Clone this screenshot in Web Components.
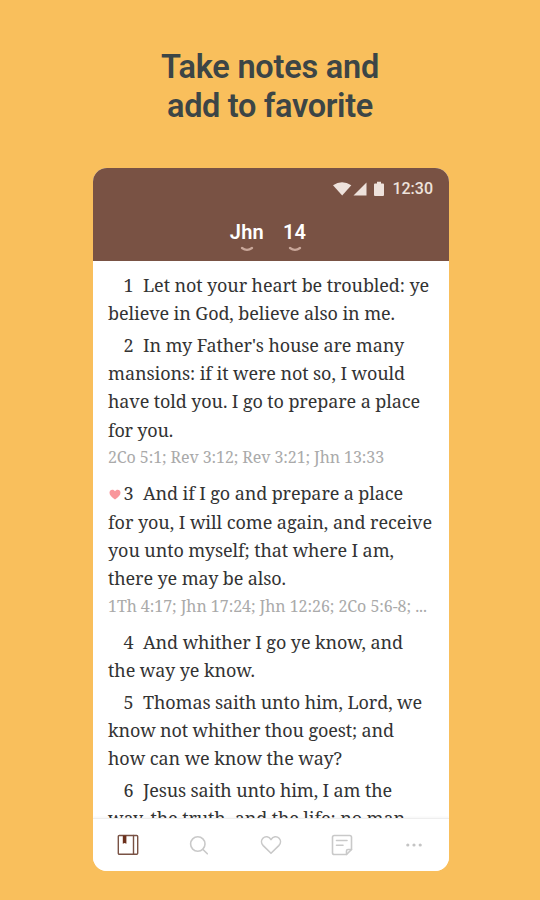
<!DOCTYPE html>
<html lang="en">
<head>
<meta charset="utf-8">
<title>Take notes and add to favorite</title>
<style>
  body {
    margin: 0;
    background: #f9bf5c;
    font-family: Roboto, "Liberation Sans", sans-serif;
  }
</style>
</head>
<body>
<promo-page>
  <fit-line slot="title" width="218">Take notes and</fit-line>
  <fit-line slot="title" width="206">add to favorite</fit-line>
  <phone-frame>
    <status-bar slot="header"></status-bar>
    <passage-picker slot="header" book="Jhn" chapter="14"></passage-picker>
    <bible-verse number="1">
      <fit-line width="286">Let not your heart be troubled: ye</fit-line>
      <fit-line width="287">believe in God, believe also in me.</fit-line>
    </bible-verse>
    <bible-verse number="2">
      <fit-line width="261">In my Father's house are many</fit-line>
      <fit-line width="297">mansions: if it were not so, I would</fit-line>
      <fit-line width="312">have told you. I go to prepare a place</fit-line>
      <fit-line width="65">for you.</fit-line>
      <fit-line slot="refs" width="276">2Co 5:1; Rev 3:12; Rev 3:21; Jhn 13:33</fit-line>
    </bible-verse>
    <bible-verse number="3" favorite>
      <fit-line width="260">And if I go and prepare a place</fit-line>
      <fit-line width="324">for you, I will come again, and receive</fit-line>
      <fit-line width="286">you unto myself; that where I am,</fit-line>
      <fit-line width="178">there ye may be also.</fit-line>
      <fit-line slot="refs" width="319">1Th 4:17; Jhn 17:24; Jhn 12:26; 2Co 5:6-8; ...</fit-line>
    </bible-verse>
    <bible-verse number="4">
      <fit-line width="260">And whither I go ye know, and</fit-line>
      <fit-line width="147">the way ye know.</fit-line>
    </bible-verse>
    <bible-verse number="5">
      <fit-line width="279">Thomas saith unto him, Lord, we</fit-line>
      <fit-line width="286">know not whither thou goest; and</fit-line>
      <fit-line width="234">how can we know the way?</fit-line>
    </bible-verse>
    <bible-verse number="6">
      <fit-line width="249">Jesus saith unto him, I am the</fit-line>
      <fit-line width="297">way, the truth, and the life: no man</fit-line>
    </bible-verse>
    <tab-bar slot="footer"></tab-bar>
  </phone-frame>
</promo-page>

<script>
function attach(el, html) {
  const template = document.createElement("template");
  template.innerHTML = html;
  el.attachShadow({ mode: "open" }).appendChild(template.content.cloneNode(true));
}

/**
 * One line of text, tracked so that it fills the given width.
 */
class FitLine extends HTMLElement {
  constructor() {
    super();
    attach(this, `
      <style>
        :host { display: block; white-space: nowrap; }
        span { display: inline-block; }
      </style>
      <span><slot></slot></span>
    `);
  }

  fit() {
    const span = this.shadowRoot.querySelector("span");
    const width = Number(this.getAttribute("width"));
    const count = this.textContent.length;
    span.style.letterSpacing = "0px";
    const natural = span.getBoundingClientRect().width;
    span.style.letterSpacing = (width - natural) / count + "px";
  }
}

class PromoPage extends HTMLElement {
  constructor() {
    super();
    attach(this, `
      <style>
        :host {
          display: flex;
          flex-direction: column;
          align-items: center;
          box-sizing: border-box;
          height: 900px;
          padding-top: 48px;
          overflow: hidden;
        }
        header {
          display: flex;
          flex-direction: column;
          align-items: center;
          height: 120px;
          color: #3c4546;
          font-size: 32.500px;
          font-weight: 600;
          line-height: 38.500px;
        }
      </style>
      <header><slot name="title"></slot></header>
      <slot></slot>
    `);
  }
}

class PhoneFrame extends HTMLElement {
  constructor() {
    super();
    attach(this, `
      <style>
        :host {
          display: flex;
          flex-direction: column;
          width: 356px;
          height: 703px;
          margin-left: 1px;
          border-radius: 14px;
          overflow: hidden;
          background: #fff;
        }
        .header {
          flex: none;
          height: 93px;
          background: #795244;
          color: #fff;
        }
        main {
          flex: 1;
          min-height: 0;
          box-sizing: border-box;
          padding: 9.800px 15px 0 15.500px;
          overflow: hidden;
        }
      </style>
      <div class="header"><slot name="header"></slot></div>
      <main><slot></slot></main>
      <slot name="footer"></slot>
    `);
  }
}

class StatusBar extends HTMLElement {
  constructor() {
    super();
    attach(this, `
      <style>
        :host {
          display: flex;
          justify-content: flex-end;
          align-items: center;
          height: 41px;
          padding-right: 15.500px;
          color: #eee2dc;
          font-size: 16px;
          font-weight: 500;
        }
        svg { fill: currentColor; }
        .battery { margin: 0 8px 0 5px; }
      </style>
      <svg width="36" height="16" viewBox="0 0 36 16">
        <path d="M0 4.200Q9 -1.500 18.300 4.200L9.200 14.500Z"/>
        <path d="M20.500 14.500H33.500V1.500Z"/>
      </svg>
      <svg class="battery" width="10" height="16" viewBox="0 0 10 16">
        <path d="M3 .8h4v1.700h2q1 0 1 1v10.500q0 1-1 1H1q-1 0-1-1V3.500q0-1 1-1h2z"/>
      </svg>
      <span>12:30</span>
    `);
  }
}

class PassagePicker extends HTMLElement {
  constructor() {
    super();
    attach(this, `
      <style>
        :host {
          display: flex;
          justify-content: center;
          gap: 19px;
          height: 52px;
          padding-right: 5px;
          font-size: 20px;
          font-weight: 600;
          letter-spacing: .2px;
        }
        div {
          display: flex;
          flex-direction: column;
          align-items: center;
          padding-top: 11px;
          line-height: 24px;
        }
        svg {
          margin-top: 2px;
          fill: none;
          stroke: #c9a79a;
          stroke-width: 2.200;
          stroke-linecap: round;
        }
      </style>
      <div>
        <span class="book"></span>
        <svg width="14" height="7" viewBox="0 0 14 7"><path d="M2 2Q7 5.800 12 2"/></svg>
      </div>
      <div>
        <span class="chapter"></span>
        <svg width="14" height="7" viewBox="0 0 14 7"><path d="M2 2Q7 5.800 12 2"/></svg>
      </div>
    `);
    this.shadowRoot.querySelector(".book").textContent = this.getAttribute("book");
    this.shadowRoot.querySelector(".chapter").textContent = this.getAttribute("chapter");
  }
}

class BibleVerse extends HTMLElement {
  constructor() {
    super();
    attach(this, `
      <style>
        :host {
          display: block;
          margin-bottom: 3px;
          color: #333;
          font: 18px/28.400px "Noto Serif", "DejaVu Serif Condensed", "DejaVu Serif", serif;
          font-stretch: condensed;
        }
        .row { display: flex; }
        .mark {
          display: flex;
          align-items: center;
          width: 15.500px;
          flex: none;
        }
        svg { display: none; margin: 2px 0 0 .5px; fill: #f9969b; }
        :host([favorite]) svg { display: block; }
        .number { width: 19.500px; flex: none; }
        ::slotted([slot="refs"]) {
          height: 25.500px;
          margin-bottom: 9.500px;
          color: #aaa;
          font-size: 16px;
          line-height: 26.500px;
        }
      </style>
      <div class="row">
        <span class="mark">
          <svg width="12" height="11" viewBox="0 0 12 11">
            <path d="M6 10.500C2.500 7.800.5 6 .5 3.700.5 1.900 1.800.7 3.300.7 4.500.7 5.500 1.300 6 2.200 6.500 1.300 7.500.7 8.700.7 10.200.7 11.500 1.900 11.500 3.700 11.500 6 9.500 7.800 6 10.500Z"/>
          </svg>
        </span>
        <span class="number"></span>
        <slot name="first"></slot>
      </div>
      <slot></slot>
      <slot name="refs"></slot>
    `);
    this.shadowRoot.querySelector(".number").textContent = this.getAttribute("number");
  }

  connectedCallback() {
    // the opening line shares its row with the verse number
    this.querySelector("fit-line").slot = "first";
  }
}

class TabBar extends HTMLElement {
  constructor() {
    super();
    attach(this, `
      <style>
        :host {
          display: grid;
          grid-template-columns: repeat(5, 71.500px);
          justify-content: center;
          justify-items: center;
          align-items: center;
          flex: none;
          box-sizing: border-box;
          height: 53px;
          border-top: 1px solid #eee;
          background: #fff;
          box-shadow: 0 -1px 2px rgba(0, 0, 0, .04);
        }
        svg {
          width: 24px;
          height: 24px;
          fill: none;
          stroke: #c9c9c9;
          stroke-width: 1.600;
          stroke-linecap: round;
          stroke-linejoin: round;
        }
        .active { stroke: #795244; stroke-width: 1.400; }
        .active .ribbon { fill: #6c301c; stroke: none; }
        .dots { fill: #c4c4c4; stroke: none; }
      </style>
      <svg class="active" viewBox="0 0 24 24">
        <rect x="2.300" y="2.500" width="19.400" height="18.800" rx="1"/>
        <path d="M17.500 2.500V21.300"/>
        <path class="ribbon" d="M6.800 2.500h3.600v8.200l-1.800-.8-1.800.8z"/>
      </svg>
      <svg viewBox="0 0 24 24">
        <circle cx="10.800" cy="11" r="7.200"/>
        <path d="M16 16.500L20.300 20.800"/>
      </svg>
      <svg viewBox="0 0 24 24">
        <path d="M12 20.300L4.200 12.600C2 10.300 2 7.200 3.900 5.200 6.200 2.900 10 3.300 12 6.600 14 3.300 17.800 2.900 20.100 5.200 22 7.200 22 10.300 19.800 12.600Z"/>
      </svg>
      <svg viewBox="0 0 24 24">
        <path d="M4.300 2.500H19.700Q21.500 2.500 21.500 4.300V16.500L16.500 21.500H4.300Q2.500 21.500 2.500 19.700V4.300Q2.500 2.500 4.300 2.500Z"/>
        <path d="M21.500 16.500H18Q16.500 16.500 16.500 18V21.500"/>
        <path d="M6.500 7.500H17M6.500 12.200H13"/>
      </svg>
      <svg class="dots" viewBox="0 0 24 24">
        <circle cx="5.800" cy="12" r="1.600"/>
        <circle cx="12" cy="12" r="1.600"/>
        <circle cx="18.200" cy="12" r="1.600"/>
      </svg>
    `);
  }
}

customElements.define("promo-page", PromoPage);
customElements.define("phone-frame", PhoneFrame);
customElements.define("status-bar", StatusBar);
customElements.define("passage-picker", PassagePicker);
customElements.define("bible-verse", BibleVerse);
customElements.define("tab-bar", TabBar);
customElements.define("fit-line", FitLine);

document.querySelectorAll("fit-line").forEach((line) => line.fit());
</script>
</body>
</html>
